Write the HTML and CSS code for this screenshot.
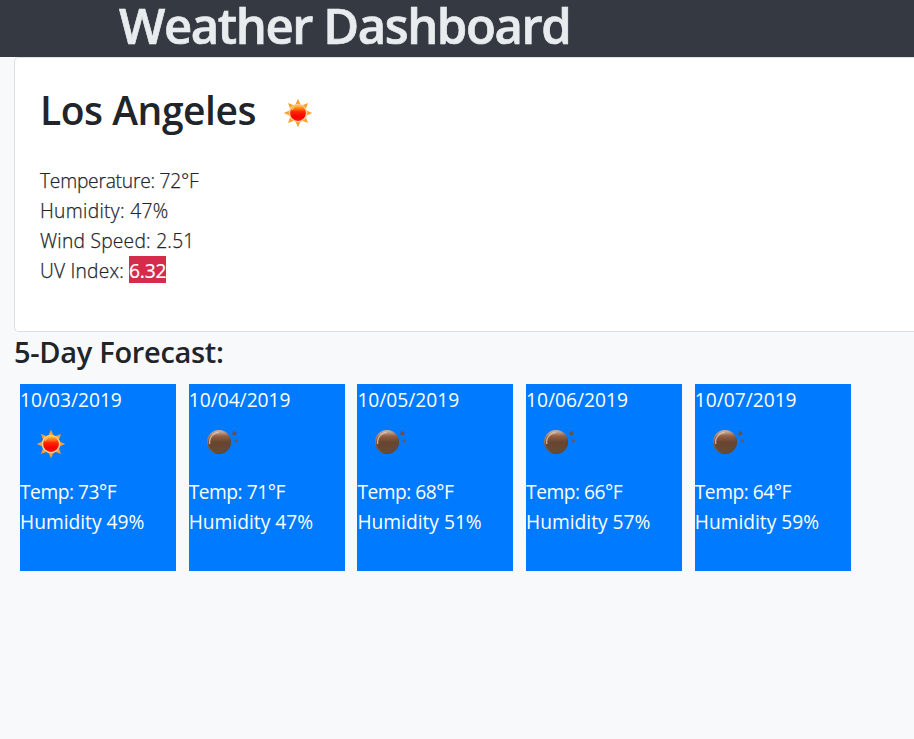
FILE: index.html
```html
<!DOCTYPE html>
<html lang="en">
<head>
<meta charset="utf-8">
<title>Weather Dashboard</title>
<link rel="stylesheet" href="styles.css">
</head>
<body>
<svg class="defs" aria-hidden="true">
  <defs>
    <linearGradient id="sunFill" x1="0" y1="0" x2="0" y2="1">
      <stop offset="0" stop-color="#ffad2b"/><stop offset=".2" stop-color="#ff851c"/><stop offset=".42" stop-color="#ff2605"/><stop offset=".75" stop-color="#fb0000"/><stop offset="1" stop-color="#f51a08"/>
    </linearGradient>
    <linearGradient id="moonFill" x1="0" y1="0" x2="0" y2="1">
      <stop offset="0" stop-color="#d8c4b8"/><stop offset=".25" stop-color="#946044"/><stop offset=".5" stop-color="#674630"/><stop offset="1" stop-color="#684a35"/>
    </linearGradient>
    <linearGradient id="moonRim" x1="0" y1="0" x2="1" y2="1">
      <stop offset="0" stop-color="#c8b5aa"/><stop offset=".4" stop-color="#a08472" stop-opacity=".4"/><stop offset=".7" stop-color="#5c4636"/>
    </linearGradient>
    <symbol id="sun" viewBox="0 0 30 30">
      <path fill="#f7a130" d="M15 .8l2.8 6.2h-5.6zM15 29.2l2.8-6.2h-5.6zM.8 15L7 12.2v5.6zM29.2 15L23 12.2v5.6zM5 5l6.4 2.4-4 4zM25 5l-6.4 2.4 4 4zM5 25l6.4-2.4-4-4zM25 25l-6.4-2.4 4-4z"/>
      <circle cx="15" cy="15" r="9.3" fill="#ffcf91"/>
      <circle cx="15" cy="15" r="7.9" fill="url(#sunFill)"/>
      <path d="M9 12a6.6 6.6 0 0 1 9-3.6" fill="none" stroke="#ffd44f" stroke-width="1"/>
    </symbol>
    <symbol id="moon" viewBox="0 0 34 28">
      <circle cx="13" cy="14" r="12" fill="url(#moonFill)"/>
      <circle cx="13" cy="14" r="11.5" fill="none" stroke="url(#moonRim)" stroke-width="1"/>
      <path d="M3.8 16a9.5 9.5 0 0 1 9-11.5" fill="none" stroke="#e2cabb" stroke-width="1.5" opacity=".75"/>
      <circle cx="28.4" cy="5.4" r="2.1" fill="#6c5148"/>
      <circle cx="30.4" cy="13" r="1.7" fill="#61586a"/>
    </symbol>
  </defs>
</svg>
<header class="header"><h1 class="title">Weather Dashboard</h1></header>
<main class="content">
  <section class="current">
    <div class="place"><h2 class="city">Los Angeles</h2><svg class="sun"><use href="#sun"/></svg></div>
    <p class="line temperature">Temperature: 72°F</p>
    <p class="line humidity">Humidity: 47%</p>
    <p class="line wind">Wind Speed: 2.51</p>
    <p class="line uv">UV Index: <span class="badge">6.32</span></p>
  </section>
  <h3 class="forecast-title">5-Day Forecast:</h3>
  <section class="forecast">
    <article class="day"><p class="date">10/03/2019</p><div class="icon"><svg class="sun"><use href="#sun"/></svg></div><p class="temp">Temp: 73°F</p><p class="hum">Humidity 49%</p></article>
    <article class="day"><p class="date">10/04/2019</p><div class="icon"><svg class="moon"><use href="#moon"/></svg></div><p class="temp">Temp: 71°F</p><p class="hum">Humidity 47%</p></article>
    <article class="day"><p class="date">10/05/2019</p><div class="icon"><svg class="moon"><use href="#moon"/></svg></div><p class="temp">Temp: 68°F</p><p class="hum">Humidity 51%</p></article>
    <article class="day"><p class="date">10/06/2019</p><div class="icon"><svg class="moon"><use href="#moon"/></svg></div><p class="temp">Temp: 66°F</p><p class="hum">Humidity 57%</p></article>
    <article class="day"><p class="date">10/07/2019</p><div class="icon"><svg class="moon"><use href="#moon"/></svg></div><p class="temp">Temp: 64°F</p><p class="hum">Humidity 59%</p></article>
  </section>
</main>
</body>
</html>
```
FILE: styles.css
```css
* { box-sizing: border-box; }
body { margin: 0; background: #f8f9fa; color: #212529; font-family: "Open Sans", "Noto Sans", sans-serif; font-size: 19.2px; line-height: 30px; }
h1, h2, h3, p { margin: 0; white-space: nowrap; }
svg { display: block; flex: none; }
.defs { position: absolute; width: 0; height: 0; }
.header { height: 57px; background: #353942; padding-left: 119px; }
.title { color: #e9ecef; font-size: 49px; line-height: 51px; font-weight: 600; letter-spacing: -1.42px; -webkit-text-stroke: .7px #e9ecef; }
.content { padding-left: 14px; }
.current { height: 275px; background: #fff; border: 1px solid #dcdee1; border-right: 0; border-radius: 5px 0 0 5px; padding: 25px 0 25px 25px; }
.place { display: flex; height: 83px; }
.city { width: 243px; font-size: 39px; line-height: 54px; font-weight: 600; letter-spacing: -.46px; }
.sun { width: 30px; height: 30px; }
.place .sun { margin: 15px 0 0 0; }
.line { font-weight: 300; -webkit-text-stroke: .25px #212529; }
.temperature { letter-spacing: -.22px; }
.humidity { letter-spacing: .32px; }
.wind { letter-spacing: .25px; }
.uv { letter-spacing: .2px; }
.badge { display: inline-block; height: 27px; line-height: 29px; width: 37px; background: #d62c4b; color: #fff; font-weight: 400; letter-spacing: -.2px; vertical-align: top; -webkit-text-stroke: .2px #fff; }
.forecast-title { font-size: 29px; line-height: 39px; font-weight: 600; height: 52px; letter-spacing: -.3px; }
.forecast { display: flex; gap: 12.7px; padding-left: 6px; }
.day { width: 156px; height: 187px; background: #007bff; color: #fff; }
.date { height: 30px; line-height: 32px; }
.temp { letter-spacing: -.48px; }
.icon { height: 63px; padding: 15px 0 0 16px; }
.icon .moon { width: 34px; height: 28px; margin: -1px 0 0 1px; }
```
